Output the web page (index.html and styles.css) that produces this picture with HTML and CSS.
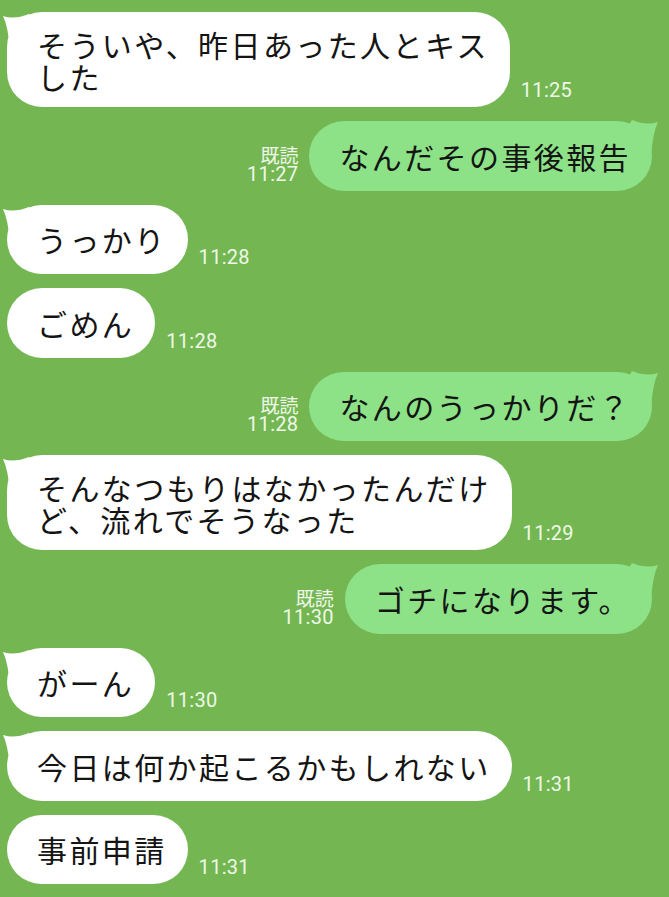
FILE: index.html
```html
<!DOCTYPE html>
<html lang="ja">
<head>
<meta charset="utf-8">
<title>Chat</title>
<link rel="stylesheet" href="styles.css">
</head>
<body>
<main class="chat">
  <div class="row left">
    <div class="bubble in"><svg class="tail" viewBox="0 0 40 40"><path d="M3 4 Q14 8 29 2 L40 20 L10 38 Q8 14 3 4 Z"/></svg><span class="text">そういや、昨日あった人とキス<br>した</span></div>
    <div class="meta"><span class="time">11:25</span></div>
  </div>
  <div class="row right">
    <div class="meta"><span class="read">既読</span><span class="time">11:27</span></div>
    <div class="bubble out"><svg class="tail" viewBox="0 0 40 40"><path d="M3 4 Q14 8 29 2 L40 20 L10 38 Q8 14 3 4 Z"/></svg><span class="text">なんだその事後報告</span></div>
  </div>
  <div class="row left">
    <div class="bubble in"><svg class="tail" viewBox="0 0 40 40"><path d="M3 4 Q14 8 29 2 L40 20 L10 38 Q8 14 3 4 Z"/></svg><span class="text">うっかり</span></div>
    <div class="meta"><span class="time">11:28</span></div>
  </div>
  <div class="row left">
    <div class="bubble in"><span class="text">ごめん</span></div>
    <div class="meta"><span class="time">11:28</span></div>
  </div>
  <div class="row right">
    <div class="meta"><span class="read">既読</span><span class="time">11:28</span></div>
    <div class="bubble out"><svg class="tail" viewBox="0 0 40 40"><path d="M3 4 Q14 8 29 2 L40 20 L10 38 Q8 14 3 4 Z"/></svg><span class="text">なんのうっかりだ？</span></div>
  </div>
  <div class="row left">
    <div class="bubble in"><svg class="tail" viewBox="0 0 40 40"><path d="M3 4 Q14 8 29 2 L40 20 L10 38 Q8 14 3 4 Z"/></svg><span class="text">そんなつもりはなかったんだけ<br>ど、流れでそうなった</span></div>
    <div class="meta"><span class="time">11:29</span></div>
  </div>
  <div class="row right">
    <div class="meta"><span class="read">既読</span><span class="time">11:30</span></div>
    <div class="bubble out"><svg class="tail" viewBox="0 0 40 40"><path d="M3 4 Q14 8 29 2 L40 20 L10 38 Q8 14 3 4 Z"/></svg><span class="text">ゴチになります。</span></div>
  </div>
  <div class="row left">
    <div class="bubble in"><svg class="tail" viewBox="0 0 40 40"><path d="M3 4 Q14 8 29 2 L40 20 L10 38 Q8 14 3 4 Z"/></svg><span class="text">がーん</span></div>
    <div class="meta"><span class="time">11:30</span></div>
  </div>
  <div class="row left">
    <div class="bubble in"><svg class="tail" viewBox="0 0 40 40"><path d="M3 4 Q14 8 29 2 L40 20 L10 38 Q8 14 3 4 Z"/></svg><span class="text">今日は何か起こるかもしれない</span></div>
    <div class="meta"><span class="time">11:31</span></div>
  </div>
  <div class="row left">
    <div class="bubble in"><span class="text">事前申請</span></div>
    <div class="meta"><span class="time">11:31</span></div>
  </div>
</main>
</body>
</html>
```
FILE: styles.css
```css
html, body {
  margin: 0;
  padding: 0;
  background: #74b752;
  overflow: hidden;
}
body {
  width: 669px;
  height: 897px;
}
.chat {
  display: flex;
  flex-direction: column;
  gap: 14px;
  padding-top: 12px;
}
.row {
  display: flex;
  align-items: flex-end;
}
.row.left {
  padding-left: 7px;
}
.row.right {
  justify-content: flex-end;
  padding-right: 17px;
}
.bubble {
  position: relative;
  display: flex;
  align-items: center;
  min-height: 69.5px;
  box-sizing: border-box;
  padding: 15.5px 21px 15.5px 30px;
  border-radius: 35px;
  font-family: "Noto Sans CJK JP", "Noto Sans", sans-serif;
  font-size: 30px;
  letter-spacing: 2.4px;
  line-height: 32px;
  color: #141414;
  white-space: nowrap;
}
.bubble.in {
  background: #ffffff;
}
.bubble.out {
  background: #8de187;
}
.tail {
  position: absolute;
  top: 0;
  width: 40px;
  height: 40px;
}
.bubble.in .tail {
  left: -7px;
  fill: #ffffff;
}
.bubble.out .tail {
  right: -9px;
  top: -3px;
  transform: scaleX(-1);
  fill: #8de187;
}
.text {
  position: relative;
}
.meta {
  display: flex;
  flex-direction: column;
  align-items: flex-end;
  margin: 0 11px 7px;
  color: #eef7e9;
  font-family: Roboto, "Noto Sans CJK JP", sans-serif;
}
.time {
  font-size: 20px;
  line-height: 20px;
  letter-spacing: 0.3px;
}
.read {
  font-family: "Noto Sans CJK JP", sans-serif;
  font-size: 19px;
  line-height: 18px;
}
```
